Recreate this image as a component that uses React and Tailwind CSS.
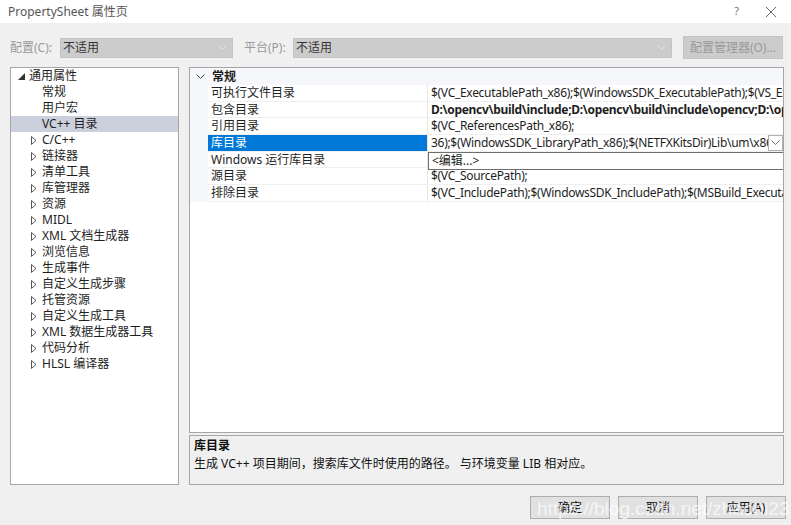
import React from 'react';

const font = { fontFamily: '"Noto Sans", "Noto Sans CJK SC", sans-serif' };

const treeItems = [
  { label: '常规', level: 2 },
  { label: '用户宏', level: 2 },
  { label: 'VC++ 目录', level: 2, selected: true },
  { label: 'C/C++', level: 1 },
  { label: '链接器', level: 1 },
  { label: '清单工具', level: 1 },
  { label: '库管理器', level: 1 },
  { label: '资源', level: 1 },
  { label: 'MIDL', level: 1 },
  { label: 'XML 文档生成器', level: 1 },
  { label: '浏览信息', level: 1 },
  { label: '生成事件', level: 1 },
  { label: '自定义生成步骤', level: 1 },
  { label: '托管资源', level: 1 },
  { label: '自定义生成工具', level: 1 },
  { label: 'XML 数据生成器工具', level: 1 },
  { label: '代码分析', level: 1 },
  { label: 'HLSL 编译器', level: 1 },
];

const props = [
  { name: '可执行文件目录', value: '$(VC_ExecutablePath_x86);$(WindowsSDK_ExecutablePath);$(VS_ExecutablePath);$(MSBuild_ExecutablePath)' },
  { name: '包含目录', value: 'D:\\opencv\\build\\include;D:\\opencv\\build\\include\\opencv;D:\\opencv\\build\\include\\opencv2', bold: true },
  { name: '引用目录', value: '$(VC_ReferencesPath_x86);' },
  { name: '库目录', value: '36);$(WindowsSDK_LibraryPath_x86);$(NETFXKitsDir)Lib\\um\\x86', selected: true },
  { name: 'Windows 运行库目录', value: '' },
  { name: '源目录', value: '$(VC_SourcePath);' },
  { name: '排除目录', value: '$(VC_IncludePath);$(WindowsSDK_IncludePath);$(MSBuild_ExecutablePath);$(VC_LibraryPath_x86)' },
];

const Chevron = ({ className }) => (
  <svg width="9" height="6" viewBox="0 0 9 6" className={className}>
    <path d="M0.5 0.5 L4.5 4.5 L8.5 0.5" fill="none" stroke="currentColor" strokeWidth="1" />
  </svg>
);

const Collapsed = () => (
  <svg width="6" height="9" viewBox="0 0 6 9" className="text-[#555]">
    <path d="M0.5 0.5 L5 4.5 L0.5 8.5 Z" fill="none" stroke="currentColor" strokeWidth="1" />
  </svg>
);

const Expanded = () => (
  <svg width="7" height="7" viewBox="0 0 7 7">
    <path d="M7 0 L7 7 L0 7 Z" fill="#333" />
  </svg>
);

const DisabledSelect = ({ width, text }) => (
  <div className={`${width} h-[20px] bg-[#cccccc] border border-[#c4c4c4] flex items-center justify-between pl-[2px] pr-[5px]`}>
    <span className="text-[12px] text-[#333]">{text}</span>
    <Chevron className="text-[#e4e4e4]" />
  </div>
);

const Button = ({ children, className }) => (
  <div className={`w-[80px] h-[23px] bg-[#e1e1e1] border border-[#adadad] flex items-center justify-center text-[12px] text-[#111] ${className || ''}`}>
    {children}
  </div>
);

export default function App() {
  return (
    <div className="w-[791px] h-[525px] bg-[#f0f0f0] flex flex-col relative overflow-hidden" style={font}>
      {/* title bar */}
      <div className="h-[23px] bg-white flex items-center justify-between pl-[8px] pr-[14px]">
        <span className="text-[12px] text-[#555]">PropertySheet 属性页</span>
        <div className="flex items-center gap-[26px] text-[#777]">
          <span className="text-[11px]">?</span>
          <svg width="12" height="12" viewBox="0 0 12 12">
            <path d="M1 1 L11 11 M11 1 L1 11" stroke="#666" strokeWidth="1" />
          </svg>
        </div>
      </div>

      {/* config row */}
      <div className="mt-[13px] h-[23px] flex items-center pl-[10px]">
        <span className="w-[50px] text-[12px] text-[#9a9a9a]">配置(C):</span>
        <DisabledSelect width="w-[173px]" text="不适用" />
        <span className="ml-[11px] w-[49px] text-[12px] text-[#9a9a9a]">平台(P):</span>
        <DisabledSelect width="w-[379px]" text="不适用" />
        <div className="ml-[11px] w-[100px] h-[23px] bg-[#cccccc] border border-[#c4c4c4] flex items-center justify-center text-[12px] text-[#9a9a9a]">
          配置管理器(O)...
        </div>
      </div>

      {/* main */}
      <div className="mt-[8px] h-[418px] flex pl-[10px]">
        {/* tree */}
        <div className="w-[169px] h-full bg-white border border-[#a6a6a6] flex flex-col">
          <div className="h-[16px] flex items-center pl-[7px] gap-[4px] text-[12px] text-[#1e1e1e]">
            <Expanded />
            <span>通用属性</span>
          </div>
          {treeItems.map((it) => (
            <div
              key={it.label}
              className={`h-[16px] flex items-center text-[12px] text-[#1e1e1e] ${it.selected ? 'bg-[#ccd0dc]' : ''} ${it.level === 2 ? 'pl-[31px]' : 'pl-[20px] gap-[5px]'}`}
            >
              {it.level === 1 && <Collapsed />}
              <span>{it.label}</span>
            </div>
          ))}
        </div>

        {/* right column */}
        <div className="ml-[10px] w-[595px] h-full flex flex-col">
          <div className="h-[366px] bg-white border border-[#a6a6a6] relative overflow-hidden">
            <div className="flex">
              <div className="w-[18px] bg-[#f5f7fa] shrink-0" />
              <div className="flex-1 min-w-0">
                <div className="h-[17px] flex items-center bg-[#f5f7fa] text-[12px] font-bold text-[#1e1e1e] pl-[4px]">常规</div>
                {props.map((p) => (
                  <div key={p.name} className="h-[16.7px] flex border-b border-[#f0f0f0]">
                    <div className={`w-[220px] shrink-0 flex items-center pl-[3px] text-[12px] border-r border-[#e6e6e6] ${p.selected ? 'bg-[#0078d7] text-white' : 'text-[#1e1e1e]'}`}>
                      {p.name}
                    </div>
                    {p.selected ? (
                      <div className="flex-1 min-w-0 flex items-center pl-[3px] text-[12px] tracking-[-0.3px] text-[#1e1e1e] whitespace-nowrap">
                        <span className="flex-1 min-w-0 overflow-hidden">{p.value}</span>
                        <div className="w-[15px] h-[16px] border border-[#b0b0b0] bg-white flex items-center justify-center shrink-0">
                          <Chevron className="text-[#777]" />
                        </div>
                      </div>
                    ) : (
                      <div className={`flex-1 min-w-0 flex items-center pl-[3px] text-[12px] tracking-[-0.3px] text-[#1e1e1e] whitespace-nowrap overflow-hidden ${p.bold ? 'font-bold' : ''}`}>
                        {p.value}
                      </div>
                    )}
                  </div>
                ))}
              </div>
            </div>
            {/* chevron of category */}
            <div className="absolute left-[6px] top-[6px] text-[#444]">
              <Chevron />
            </div>
            {/* dropdown list */}
            <div className="absolute left-[238px] top-[84px] w-[356px] h-[18px] bg-white border border-[#6e6e6e] flex items-center pl-[3px] text-[12px] text-[#1e1e1e]">
              &lt;编辑...&gt;
            </div>
          </div>
          <div className="mt-[2px] h-[50px] border border-[#a6a6a6] bg-[#f0f0f0] px-[4px] pt-[1px]">
            <div className="text-[12px] font-bold text-[#111] leading-[18px]">库目录</div>
            <div className="text-[12px] text-[#111] leading-[18px]">生成 VC++ 项目期间，搜索库文件时使用的路径。 与环境变量 LIB 相对应。</div>
          </div>
        </div>
      </div>

      {/* buttons */}
      <div className="mt-[11px] flex pl-[530px]">
        <Button>确定</Button>
        <Button className="ml-[8px]">取消</Button>
        <Button className="ml-[8px]">应用(A)</Button>
      </div>

      {/* watermark */}
      <div
        className="absolute left-[537px] top-[495px] text-[19px] text-white/70 whitespace-nowrap pointer-events-none"
        style={{ fontFamily: '"Liberation Sans", sans-serif' }}
      >
        https://blog.csdn.net/zhaoni2323
      </div>
    </div>
  );
}
